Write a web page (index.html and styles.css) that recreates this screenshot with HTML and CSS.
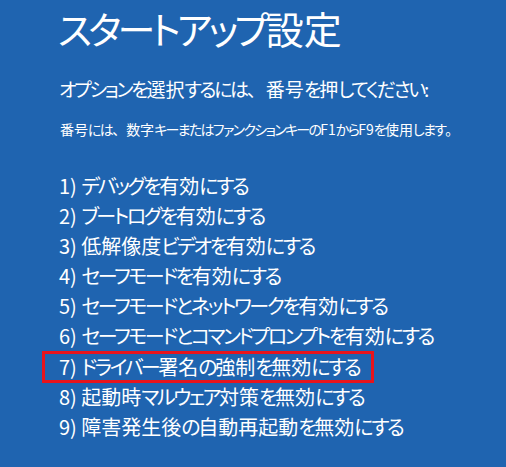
FILE: index.html
```html
<!DOCTYPE html>
<html lang="ja">
<head>
<meta charset="utf-8">
<title>スタートアップ設定</title>
<link rel="stylesheet" href="styles.css">
</head>
<body>
<main class="screen">
  <h1 class="title"><span class="k">スタートアップ</span>設定</h1>
  <p class="prompt"><span class="k">オプションを</span>選択<span class="k">するには</span><span class="full">、</span>番号<span class="k">を</span>押<span class="k">してください</span>:</p>
  <p class="hint">番号<span class="k">には</span><span class="full">、</span>数字<span class="k">キーまたはファンクションキーの</span>F1<span class="k">から</span>F9<span class="k">を</span>使用<span class="k">します</span><span class="full">。</span></p>
  <ol class="options">
    <li class="option">1) <span class="k">デバッグを</span>有効<span class="k">にする</span></li>
    <li class="option">2) <span class="k">ブートログを</span>有効<span class="k">にする</span></li>
    <li class="option">3) 低解像度<span class="k">ビデオを</span>有効<span class="k">にする</span></li>
    <li class="option">4) <span class="k">セーフモードを</span>有効<span class="k">にする</span></li>
    <li class="option">5) <span class="k">セーフモードとネットワークを</span>有効<span class="k">にする</span></li>
    <li class="option">6) <span class="k">セーフモードとコマンドプロンプトを</span>有効<span class="k">にする</span></li>
    <li class="option option-marked">7) <span class="k">ドライバー</span>署名<span class="k">の</span>強制<span class="k">を</span>無効<span class="k">にする</span></li>
    <li class="option">8) 起動時<span class="k">マルウェア</span>対策<span class="k">を</span>無効<span class="k">にする</span></li>
    <li class="option">9) 障害発生後<span class="k">の</span>自動再起動<span class="k">を</span>無効<span class="k">にする</span></li>
  </ol>
</main>
</body>
</html>
```

FILE: styles.css
```css
html, body {
  margin: 0;
  padding: 0;
}
body {
  background: #1f64b0;
  width: 506px;
  height: 467px;
  overflow: hidden;
}
.screen {
  padding: 4px 0 0 58px;
  color: #ffffff;
  font-family: "Noto Sans CJK JP", "Noto Sans", sans-serif;
  font-weight: 400;
  font-feature-settings: "palt";
}
.k {
  letter-spacing: -0.12em;
}
.full {
  font-feature-settings: normal;
}
.title {
  margin: 0;
  font-size: 38px;
  line-height: 48px;
  font-weight: 400;
}
.title .k {
  letter-spacing: -0.1em;
}
.prompt {
  margin: 23px 0 0 1px;
  font-size: 19px;
  line-height: 28px;
}
.hint {
  margin: 16px 0 0 2px;
  font-size: 14px;
  line-height: 20px;
}
.options {
  list-style: none;
  margin: 32px 0 0 1px;
  padding: 0;
}
.option {
  font-size: 20px;
  line-height: 30px;
  height: 30px;
  white-space: nowrap;
}
.option-marked {
  box-sizing: border-box;
  width: 332px;
  height: 32px;
  line-height: 26px;
  margin: 0 0 -1px -17px;
  padding-left: 14px;
  border: 3px solid #e8141c;
}
```
